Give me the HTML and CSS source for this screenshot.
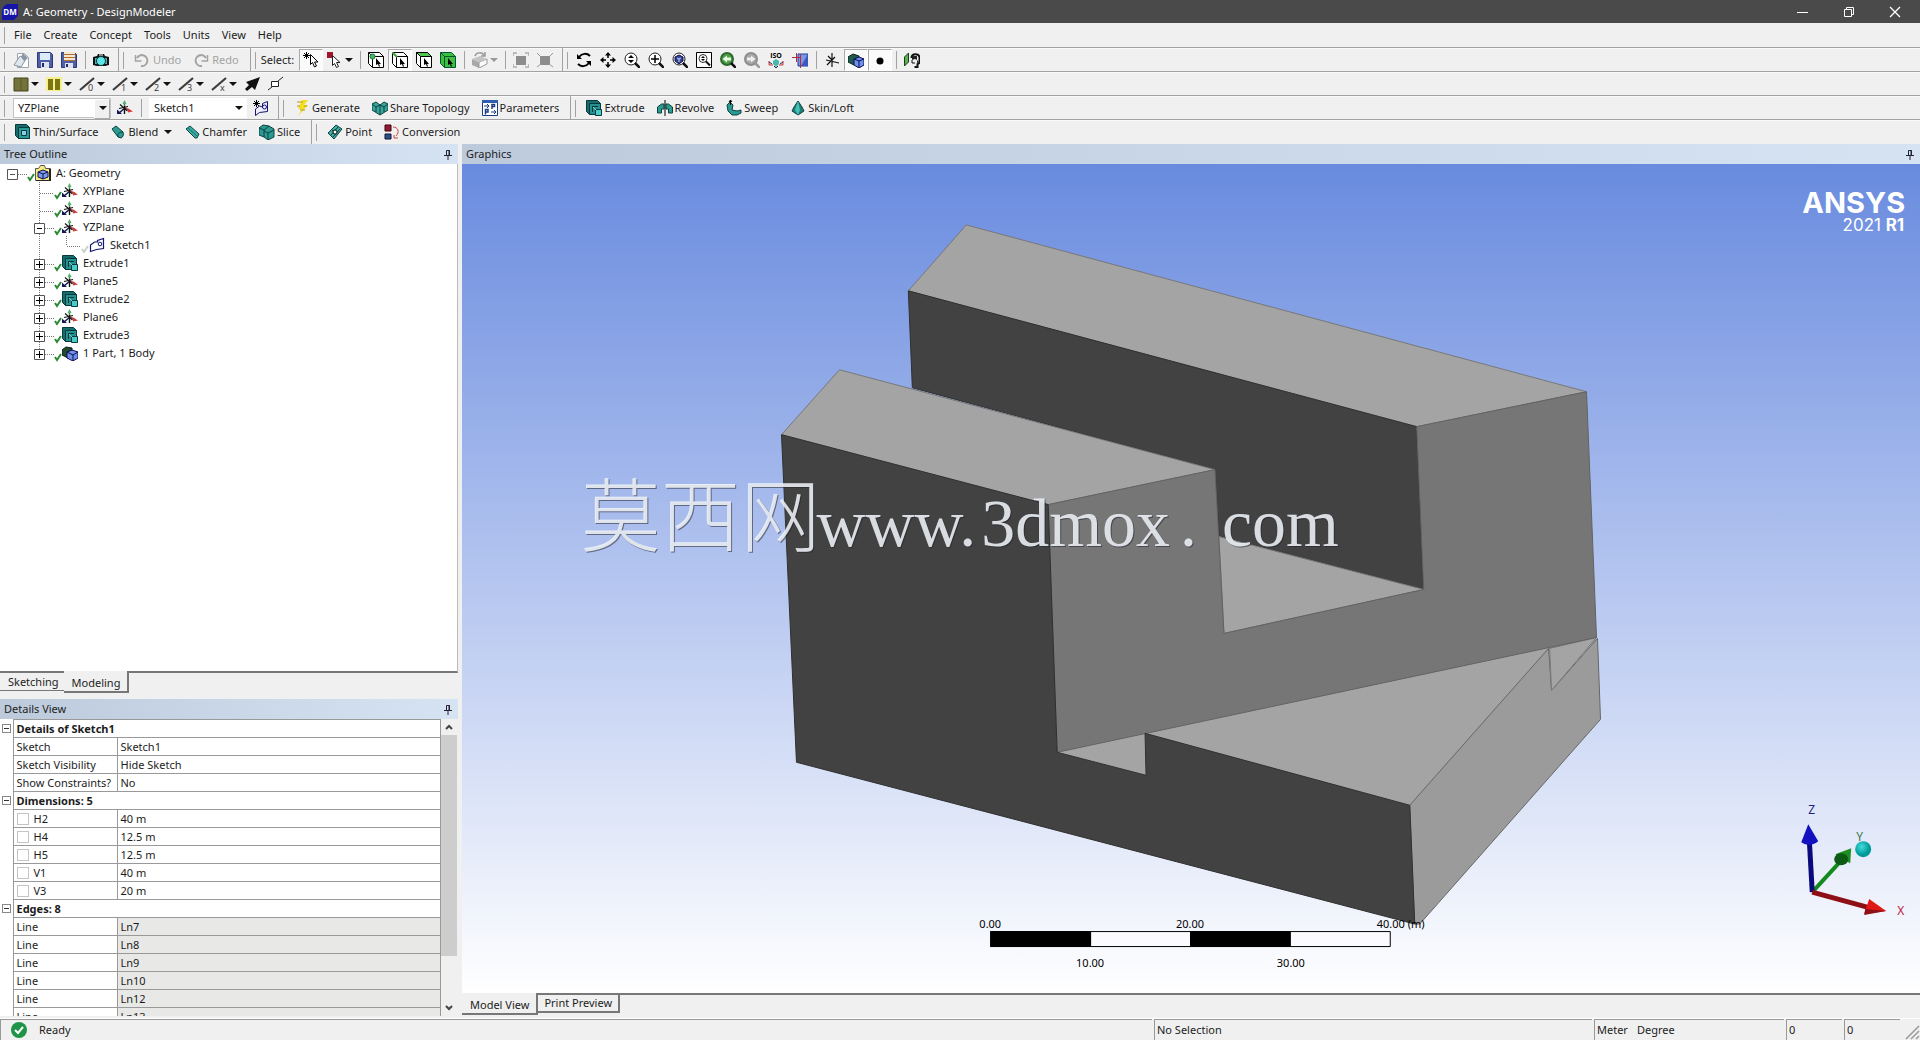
FILE: index.html
```html
<!DOCTYPE html>
<html lang="en">
<head>
<meta charset="utf-8">
<title>A: Geometry - DesignModeler</title>
<link rel="stylesheet" href="styles.css">
</head>
<body>
<svg class="defs" aria-hidden="true">
  <symbol id="pin" viewBox="0 0 8 11"><path d="M2.500 6V1.500h3V6M0 6.500h8M4 7v4" fill="none" stroke="#223"/><path d="M5 1v5" stroke="#223"/></symbol>
  <symbol id="b-leaf" viewBox="0 0 20 18"><path d="M5.500 0v18M6 11.500h14" class="dots"/></symbol>
  <symbol id="b-line" viewBox="0 0 20 18"><path d="M5.500 0v18" class="dots"/></symbol>
  <symbol id="b-end" viewBox="0 0 20 18"><path d="M5.500 0v10M6 10.500h14" class="dots"/></symbol>
  <symbol id="b-root" viewBox="0 0 20 18"><path d="M11 10.500h9" class="dots"/><path d="M.5 5.500h10v10H.5zM3 10.500h5" class="box"/></symbol>
  <symbol id="b-minus" viewBox="0 0 20 18"><path d="M5.500 0v18M11 10.500h9" class="dots"/><path d="M.5 5.500h10v10H.5z" class="box"/><path d="M3 10.500h5" stroke="#000"/></symbol>
  <symbol id="b-plus" viewBox="0 0 20 18"><path d="M5.500 0v18M11 10.500h9" class="dots"/><path d="M.5 5.500h10v10H.5z" class="box"/><path d="M2 10.500h7M5.500 7v7" stroke="#000"/></symbol>
  <symbol id="b-last" viewBox="0 0 20 18"><path d="M5.500 0v6M11 10.500h9" class="dots"/><path d="M.5 5.500h10v10H.5z" class="box"/><path d="M2 10.500h7M5.500 7v7" stroke="#000"/></symbol>
  <symbol id="check" viewBox="0 0 8 18"><path d="M1 13l2 3 4-6" fill="none" stroke="currentColor" stroke-width="2"/></symbol>
  <symbol id="axes" viewBox="0 0 16 16"><path d="M7.500 14V2" stroke="#3c8a50" stroke-width="1.500"/><path d="M5.500 4l2-4 2 4z" fill="#5ab070"/><path d="M8 8l5 2.500" stroke="#b44" stroke-width="1.500"/><path d="M11 8.500l5 3-5 1z" fill="#d43c3c"/><path d="M8 8l-6 5" stroke="#15155a" stroke-width="1.500"/><path d="M0 9.500V14h5z" fill="#15155a"/><path d="M3 4.500l7.500 6.500M7.500 6v8M2 8.500l9-2" stroke="#111" stroke-width="1.100"/></symbol>
  <symbol id="extrude" viewBox="0 0 16 16"><path d="M.5.5h11l3 3v11h-11l-3-3z" fill="#176b6b" stroke="#063a3c"/><path d="M3.500 3.500h11v11h-11z" fill="#25908e" stroke="#063a3c"/><path d="M6 6.500h6M6.500 6v6" stroke="#063a3c"/><path d="M9.500 9.500h6v6h-6z" fill="#4ccac8" stroke="#063a3c"/><path d="M7 7l3 3" stroke="#6cd8d4"/></symbol>
  <symbol id="body" viewBox="0 0 16 16"><path d="M0 5l4-3 6 1v8l-4 2-6-3z" fill="#214b2a" stroke="#0c1c12"/><path d="M5 7l5-2 6 2v6l-5 3-6-3z" fill="#6f8ee6" stroke="#0a0a58"/><path d="M5 7l6 3 5-3M11 10v6" fill="none" stroke="#0a0a58"/></symbol>
  <symbol id="geom" viewBox="0 0 16 16"><path d="M.5 3.500h3l2-3h4l1 3h5v12H.5z" fill="#f6ec7e" stroke="#555"/><path d="M15 4v12H1" fill="none" stroke="#222" stroke-width="2"/><path d="M3 7l5-2 5 2v5l-5 2-5-2z" fill="#7c9bec" stroke="#101050"/><path d="M3 7l5 2 5-2M8 9v5" fill="none" stroke="#101050"/></symbol>
  <symbol id="sketch" viewBox="0 0 16 16"><path d="M1.500 14.500V8l4-3h3V3.500l6-2v10l-7 1z" fill="#fff" stroke="#15156e" stroke-width="1.200"/><circle cx="11" cy="7" r="1.800" fill="none" stroke="#15156e"/></symbol>
  <symbol id="newsketch" viewBox="0 0 16 16"><path d="M2.500 15.500V9l4-3 3 1V3.500l5-2v10l-8 1z" fill="#eef" stroke="#15156e"/><circle cx="11.500" cy="7" r="2" fill="none" stroke="#15156e"/><path d="M3.500 0v7M0 3.500h7M1 1l5 5M6 1L1 6" stroke="#000"/></symbol>
  <symbol id="new" viewBox="0 0 16 16"><path d="M4.500 1.500h7l4 4v10h-11z" fill="#fff" stroke="#9aa4b0"/><path d="M1 13l6-9 6 3-5 8z" fill="#dfe6ee" stroke="#8b95a3"/><path d="M10 1l5 5-4 3-3-4z" fill="#8b95a3"/></symbol>
  <symbol id="save" viewBox="0 0 16 16"><path d="M.5.5h13l2 2v13H.5z" fill="#5060a8" stroke="#2b3878"/><path d="M3 1h10v7H3z" fill="#dcebf8"/><path d="M4 10h8v6H4z" fill="#dde4ee"/><path d="M5 11h2v4H5z" fill="#1f2b6b"/></symbol>
  <symbol id="saveas" viewBox="0 0 16 16"><path d="M.5.5h13l2 2v13H.5z" fill="#5060a8" stroke="#2b3878"/><path d="M3 0h11v9H3z" fill="#f3e7cf"/><path d="M3 2.500h11M3 5.500h11M3 8.500h11" stroke="#b0702c"/><path d="M4 11h8v5H4z" fill="#dde4ee"/><path d="M5 12h2v3H5z" fill="#1f2b6b"/></symbol>
  <symbol id="camera" viewBox="0 0 16 16"><path d="M0 5l4-1 1-2h6l1 2 4 1v8l-4 1H4l-4-1z" fill="#111"/><path d="M2 6h2v6H2zM12 6h2v6h-2z" fill="#54a8a8"/><circle cx="8" cy="9" r="4.500" fill="#5ee6e6" stroke="#063a3c"/><path d="M6 3h4" stroke="#fff"/></symbol>
  <symbol id="undo" viewBox="0 0 16 16"><path d="M3 6a5.500 5.500 0 1 1 4 8" fill="none" stroke="#a3a3a3" stroke-width="2"/><path d="M1.500 3v6h6" fill="none" stroke="#a3a3a3" stroke-width="1.500"/></symbol>
  <symbol id="redo" viewBox="0 0 16 16"><path d="M13 6a5.500 5.500 0 1 0-4 8" fill="none" stroke="#a3a3a3" stroke-width="2"/><path d="M14.500 3v6h-6" fill="none" stroke="#a3a3a3" stroke-width="1.500"/></symbol>
  <symbol id="cursor" viewBox="0 0 16 16"><path d="M7.500 2.500v10l2-2 2 4.500 2-1-2-4h3.500z" fill="#fff" stroke="#000"/><path d="M3.500 0v7M0 3.500h7M1 1l5 5M6 1L1 6" stroke="#000"/></symbol>
  <symbol id="redcursor" viewBox="0 0 16 16"><path d="M0 0h6v6H0z" fill="#a2142c"/><path d="M5.500 3.500v10l2-2 2 4 2-1-2-4H13z" fill="#fff" stroke="#222"/></symbol>
  <symbol id="cube-v" viewBox="0 0 16 16"><path d="M.5.5h11l4 4v11h-11l-4-4zM.5.5l4 4h11M4.500 4.500v11" fill="#fff" stroke="#000"/><circle cx="4.500" cy="4.500" r="2.500" fill="#4db84d" stroke="#175"/><path d="M8 6v7l2-1 1 3 1-1-1-2h2z" fill="#000"/></symbol>
  <symbol id="cube-e" viewBox="0 0 16 16"><path d="M.5.5h11l4 4v11h-11l-4-4zM.5.5l4 4h11M4.500 4.500v11" fill="#fff" stroke="#000"/><path d="M0 0l5 5" stroke="#3aa63a" stroke-width="2"/><path d="M8 6v7l2-1 1 3 1-1-1-2h2z" fill="#000"/></symbol>
  <symbol id="cube-f" viewBox="0 0 16 16"><path d="M.5.5h11l4 4v11h-11l-4-4z" fill="#fff" stroke="#000"/><path d="M.5.5h11l4 4h-11z" fill="#4ec84e" stroke="#000"/><path d="M4.500 4.500v11" stroke="#000"/><path d="M8 6v7l2-1 1 3 1-1-1-2h2z" fill="#000"/></symbol>
  <symbol id="cube-b" viewBox="0 0 16 16"><path d="M.5.5h11l4 4v11h-11l-4-4z" fill="#3fbf3f" stroke="#053"/><path d="M.5.5l4 4h11M4.500 4.500v11" fill="none" stroke="#053"/><path d="M8 6v7l2-1 1 3 1-1-1-2h2z" fill="#000"/></symbol>
  <symbol id="graycube" viewBox="0 0 16 16"><path d="M0 7l7 3v6l-7-3z" fill="#a8a8a8"/><path d="M7 10l8-3v5l-8 4z" fill="#fafafa" stroke="#999"/><path d="M0 7l8-3 7 3-8 3z" fill="#c4c4c4"/><path d="M3 4c1-4 7-4 9-1M13 0v4H9" fill="none" stroke="#999" stroke-width="1.500"/></symbol>
  <symbol id="fit" viewBox="0 0 16 16"><path d="M3 4h10v9H3z" fill="#8d8d8d"/><path d="M0 4V1h4M12 1h4v3M0 12v3h4M12 15h4v-3" fill="none" stroke="#8d8d8d"/></symbol>
  <symbol id="shrink" viewBox="0 0 16 16"><path d="M3 4h10v9H3z" fill="#8d8d8d"/><path d="M0 1l4 4M16 1l-4 4M0 15l4-3M16 15l-4-3" stroke="#999"/></symbol>
  <symbol id="rotate" viewBox="0 0 16 16"><path d="M3 5c3-4 8-4 11-1M13 11c-3 4-8 4-11 1" fill="none" stroke="#000" stroke-width="2"/><path d="M1 2v5h5zM15 14V9h-5z" fill="#000"/></symbol>
  <symbol id="pan" viewBox="0 0 16 16"><path d="M8 3v3M8 10v3M3 8h3M10 8h3" stroke="#000" stroke-width="1.500"/><path d="M8 0l3 3.500H5zM8 16l3-3.500H5zM0 8l3.500-3v6zM16 8l-3.500-3v6z"/></symbol>
  <symbol id="lens" viewBox="0 0 16 16"><circle cx="7" cy="7" r="6" fill="#fff" stroke="#222"/><path d="M11 11l5 5" stroke="#111" stroke-width="2.500"/></symbol>
  <symbol id="zoom" viewBox="0 0 16 16"><use href="#lens"/><path d="M7 3l3 3H4zM7 11l3-3H4z"/></symbol>
  <symbol id="zoomin" viewBox="0 0 16 16"><use href="#lens"/><path d="M3 7h8M7 3v8" stroke="#000" stroke-width="1.500"/></symbol>
  <symbol id="zoomfit" viewBox="0 0 16 16"><use href="#lens"/><path d="M3 5l4-2 4 2v4l-4 3-4-3z" fill="#334291" stroke="#101050"/><path d="M5 6l2 1 2-1M7 7v3" fill="none" stroke="#c9d4ff"/></symbol>
  <symbol id="zoombox" viewBox="0 0 16 16"><path d="M.5.5h15v15H.5z" fill="#fff" stroke="#000"/><circle cx="7" cy="6.500" r="4" fill="none" stroke="#333"/><path d="M10 9.500l4 4" stroke="#111" stroke-width="2"/><path d="M7 4l2 2H5zM7 9l2-2H5z"/></symbol>
  <symbol id="prev" viewBox="0 0 16 16"><circle cx="7" cy="7" r="6" fill="#4f9d4b" stroke="#2b6a2b" stroke-width="2"/><path d="M11 11l5 5" stroke="#111" stroke-width="2.500"/><path d="M2.500 7L7 3.500v2h4v3H7v2z" fill="#e6fbe0"/></symbol>
  <symbol id="next" viewBox="0 0 16 16"><circle cx="7" cy="7" r="6" fill="#a9a9a9" stroke="#8e8e8e" stroke-width="2"/><path d="M11 11l5 5" stroke="#999" stroke-width="2.500"/><path d="M11.500 7L7 3.500v2H3v3h4v2z" fill="#eee"/></symbol>
  <symbol id="iso" viewBox="0 0 16 16"><path d="M8 7l3 2v3l-3 3-3-3V9z" fill="#45b9ad"/><path d="M1 9v4h4M15 9v4h-4" stroke="#c33" fill="none"/><path d="M1 10l3 2M15 10l-3 2M6 14l2 2 2-2" stroke="#225" fill="none"/></symbol>
  <symbol id="lookat" viewBox="0 0 16 16"><path d="M6 2h10v12H6z" fill="#7d97e4" stroke="#223a9b"/><path d="M9 14l7-12v12z" fill="#3c57c0"/><path d="M0 5.500h8M4.500 1v9M8.500 3v13" stroke="#b32b3b"/></symbol>
  <symbol id="axesk" viewBox="0 0 16 16"><path d="M8 1v14M2 8l13 3M3 13L11 5M4 4l4 4" stroke="#111" stroke-width="1.200" fill="none"/></symbol>
  <symbol id="solid" viewBox="0 0 16 16"><path d="M0 5l5-3 6 2v8l-5 1-6-3z" fill="#1e5a4e" stroke="#0b201c"/><path d="M6 7l5-2 5 2v6l-5 3-5-3z" fill="#6f92e8" stroke="#0a0a58"/><path d="M6 7l5 2 5-2M11 9v7" fill="none" stroke="#0a0a58"/></symbol>
  <symbol id="dot" viewBox="0 0 16 16"><circle cx="8" cy="9" r="3.500"/></symbol>
  <symbol id="person" viewBox="0 0 16 16"><path d="M.5 5l4-4v9l-4 4z" fill="#5fae55" stroke="#14401a"/><path d="M7.500 6c0-5 8-5 8 0v5l-2 1v3h-3" fill="none" stroke="#111" stroke-width="2"/><path d="M8 4h5v4l2 2-2 1V8l-2-1-3 1z" fill="#222"/><path d="M8 8v3h3" fill="none" stroke="#111"/></symbol>
  <symbol id="sq1" viewBox="0 0 16 16"><path d="M1 2h14v13H1z" fill="#74743a" stroke="#45451a"/><path d="M8 2v13" stroke="#565626"/></symbol>
  <symbol id="sq2" viewBox="0 0 16 16"><path d="M0 1h16v14H0z" fill="#f6f08a"/><path d="M2 3h5v11H2zM9 3h5v11H9z" fill="#7b7512"/></symbol>
  <symbol id="slash" viewBox="0 0 16 16"><path d="M1 14L15 2" stroke="#3c3c3c" stroke-width="2.200"/></symbol>
  <symbol id="arrowb" viewBox="0 0 16 16"><path d="M16 1L11 14l-3-3-5 4-2-2 4-4-3-3z" fill="#111"/></symbol>
  <symbol id="leader" viewBox="0 0 16 16"><path d="M3.500 5.500h7v5h-7zM10 5l5-4M4 11l-4 3" fill="#fff" stroke="#222"/></symbol>
  <symbol id="bolt" viewBox="0 0 16 16"><path d="M8 0h6L10 5h4L4 16l4-7H4z" fill="#f3df1d"/><path d="M9 2H3M6 6H3M13 6h-3M11 10H6" stroke="#b59a0a"/></symbol>
  <symbol id="share" viewBox="0 0 16 16"><path d="M0 4l4-2 4 3 4-3 4 2v6l-8 5-8-5z" fill="#3aa59a" stroke="#0b4240"/><path d="M0 4l4 3 4-2 4 2 4-3M8 5v10M4 7v5M12 7v5" fill="none" stroke="#0b4240"/></symbol>
  <symbol id="params" viewBox="0 0 16 16"><path d="M.5.5h15v15H.5z" fill="#fff" stroke="#1c3d84"/><path d="M0 0h16v3H0z" fill="#2e5cae"/><path d="M2 6h4M5 4l2 2-2 2M9 12h4M12 10l2 2-2 2" fill="none" stroke="#1c3d84"/><path d="M10 9V4.500h2.500v2H10M3.500 14.500v-5H6v2.500H3.500" fill="none" stroke="#1c3d84" stroke-width="1.500"/></symbol>
  <symbol id="revolve" viewBox="0 0 16 16"><path d="M.5 13V7l4-3H7v5H4.500v4zM15.500 13V7l-4-3H9v5h2.500v4z" fill="#2d9a91" stroke="#0b4240"/><path d="M8 0v16" stroke="#000"/></symbol>
  <symbol id="sweep" viewBox="0 0 16 16"><path d="M1 5l3-3 3 3-1 5 5 1 4-1v3l-4 2H6l-4-4z" fill="#2d9a91" stroke="#0b4240"/><path d="M4.500 0v5M3 2l1.500-2L6 2" fill="none" stroke="#000"/></symbol>
  <symbol id="skin" viewBox="0 0 16 16"><path d="M8 1l4 6 2 4-6 4-6-4 2-4z" fill="#1f7f77" stroke="#0b4240"/><path d="M8 1l2 9-2 5-3-5z" fill="#44c0b6"/></symbol>
  <symbol id="thin" viewBox="0 0 16 16"><path d="M.5.5h11l3 3v11h-11l-3-3z" fill="#176b6b" stroke="#063a3c"/><path d="M3.500 3.500h11v11h-11z" fill="#2a9b98" stroke="#063a3c"/><path d="M6.500 6.500h5v5h-5z" fill="#8ce" stroke="#063a3c"/></symbol>
  <symbol id="blend" viewBox="0 0 16 16"><path d="M2 5l4-3 7 6c1 3 0 5-2 6l-3-1z" fill="#2d9a91" stroke="#0b4240"/><path d="M8 13c-1-3 1-5 5-5" fill="none" stroke="#0b4240"/></symbol>
  <symbol id="chamfer" viewBox="0 0 16 16"><path d="M2 5l4-3 9 8-2 4h-2z" fill="#3dada3" stroke="#0b4240"/><path d="M4 4l9 8" stroke="#0e6b66"/></symbol>
  <symbol id="slice" viewBox="0 0 16 16"><path d="M0 4l4-3 6 1 5 3v8l-6 3-4-3-5-2z" fill="#2d9a91" stroke="#0b4240"/><path d="M0 4l5 2 5-4M5 6v7M5 7l4 2 6-3M9 9v7" fill="none" stroke="#0b4240"/></symbol>
  <symbol id="point" viewBox="0 0 16 16"><path d="M1 9l8-8 6 4-8 10z" fill="#3dada3" stroke="#0b4240"/><path d="M4 11l7-8M6 13l7-8M5 6l5 4" stroke="#0b4240"/><circle cx="8" cy="8" r="2" fill="#fff" stroke="#111"/></symbol>
  <symbol id="convert" viewBox="0 0 16 16"><path d="M1 1h6v6H1z" fill="#8c1d3c" stroke="#400"/><path d="M1 10h6v5H1z" fill="#28528c" stroke="#113"/><path d="M9 3c5 0 7 5 3 9M10 11v3h4" fill="none" stroke="#c5483f"/></symbol>
</svg>

<div class="app">
  <header class="titlebar">
    <svg class="logo" viewBox="0 0 16 16"><path d="M1 3l4-3h11v12l-4 4H0V8z" fill="#1714a8"/><text x="8" y="11" text-anchor="middle" class="logotext">DM</text></svg>
    <h1 class="title">A: Geometry - DesignModeler</h1>
    <div class="winctl">
      <button aria-label="Minimize"><svg viewBox="0 0 12 12"><path d="M0 6.500h11" stroke="#fff" stroke-width="1"/></svg></button>
      <button aria-label="Restore"><svg viewBox="0 0 12 12"><path d="M1.500 3.500h7v7h-7zM3.500 3V1.500h7v7H9" fill="none" stroke="#fff"/></svg></button>
      <button aria-label="Close"><svg viewBox="0 0 12 12"><path d="M1 1l10 10M11 1L1 11" stroke="#fff" stroke-width="1.300"/></svg></button>
    </div>
  </header>

  <nav class="bar menu">
    <i class="grip"></i>
    <button>File</button><button>Create</button><button>Concept</button><button>Tools</button><button>Units</button><button>View</button><button>Help</button>
  </nav>

  <div class="bar">
    <div class="group"><i class="grip"></i>
      <button class="ic" aria-label="New"><svg><use href="#new"/></svg></button>
      <button class="ic" aria-label="Save"><svg><use href="#save"/></svg></button>
      <button class="ic" aria-label="Export"><svg><use href="#saveas"/></svg></button>
      <i class="sep"></i>
      <button class="ic" aria-label="Image capture"><svg><use href="#camera"/></svg></button>
    </div>
    <div class="group"><i class="grip"></i>
      <button class="tx" disabled><svg><use href="#undo"/></svg>Undo</button>
      <button class="tx" disabled><svg><use href="#redo"/></svg>Redo</button>
    </div>
    <div class="group"><i class="grip"></i>
      <span class="caption">Select:</span>
      <button class="ic on" aria-label="New selection"><svg><use href="#cursor"/></svg></button>
      <button class="dd" aria-label="Select mode"><svg><use href="#redcursor"/></svg></button>
      <i class="sep"></i>
      <button class="ic" aria-label="Points"><svg><use href="#cube-v"/></svg></button>
      <button class="ic on" aria-label="Edges"><svg><use href="#cube-e"/></svg></button>
      <button class="ic" aria-label="Faces"><svg><use href="#cube-f"/></svg></button>
      <button class="ic" aria-label="Bodies"><svg><use href="#cube-b"/></svg></button>
      <i class="sep"></i>
      <button class="dd" disabled aria-label="Extend selection"><svg><use href="#graycube"/></svg></button>
      <i class="sep"></i>
      <button class="ic" disabled aria-label="Expand face"><svg><use href="#fit"/></svg></button>
      <button class="ic" disabled aria-label="Shrink face"><svg><use href="#shrink"/></svg></button>
    </div>
    <div class="group last"><i class="grip"></i>
      <button class="ic" aria-label="Rotate"><svg><use href="#rotate"/></svg></button>
      <button class="ic" aria-label="Pan"><svg><use href="#pan"/></svg></button>
      <button class="ic" aria-label="Zoom"><svg><use href="#zoom"/></svg></button>
      <button class="ic" aria-label="Box zoom"><svg><use href="#zoomin"/></svg></button>
      <button class="ic" aria-label="Zoom to fit"><svg><use href="#zoomfit"/></svg></button>
      <button class="ic" aria-label="Magnifier"><svg><use href="#zoombox"/></svg></button>
      <button class="ic" aria-label="Previous view"><svg><use href="#prev"/></svg></button>
      <button class="ic" disabled aria-label="Next view"><svg><use href="#next"/></svg></button>
      <button class="ic" aria-label="Isometric view"><svg viewBox="0 0 16 16"><use href="#iso"/><text x="8" y="6" text-anchor="middle" class="isotext">ISO</text></svg></button>
      <button class="ic" aria-label="Look at plane"><svg><use href="#lookat"/></svg></button>
      <i class="sep"></i>
      <button class="ic" aria-label="Display plane"><svg><use href="#axesk"/></svg></button>
      <button class="ic on" aria-label="Display model"><svg><use href="#solid"/></svg></button>
      <button class="ic on" aria-label="Display points"><svg><use href="#dot"/></svg></button>
      <i class="sep"></i>
      <button class="ic" aria-label="Look at face"><svg><use href="#person"/></svg></button>
    </div>
  </div>

  <div class="bar">
    <i class="grip"></i>
    <button class="dd" aria-label="Face colour"><svg><use href="#sq1"/></svg></button>
    <button class="dd" aria-label="Edge colour"><svg><use href="#sq2"/></svg></button>
    <button class="dd" aria-label="Free edges"><svg viewBox="0 0 16 16"><use href="#slash"/><text x="9" y="15" class="num">0</text></svg></button>
    <button class="dd" aria-label="Single edges"><svg viewBox="0 0 16 16"><use href="#slash"/><text x="9" y="15" class="num">1</text></svg></button>
    <button class="dd" aria-label="Double edges"><svg viewBox="0 0 16 16"><use href="#slash"/><text x="9" y="15" class="num">2</text></svg></button>
    <button class="dd" aria-label="Triple edges"><svg viewBox="0 0 16 16"><use href="#slash"/><text x="9" y="15" class="num">3</text></svg></button>
    <button class="dd" aria-label="Multiple edges"><svg viewBox="0 0 16 16"><use href="#slash"/><text x="9" y="15" class="num">x</text></svg></button>
    <button class="ic" aria-label="Edge direction"><svg><use href="#arrowb"/></svg></button>
    <button class="ic" aria-label="Display vertices"><svg><use href="#leader"/></svg></button>
  </div>

  <div class="bar">
    <div class="group"><i class="grip"></i>
      <span class="combo raised"><select aria-label="Active plane"><option>YZPlane</option></select></span>
      <button class="ic" aria-label="New plane"><svg><use href="#axes"/></svg></button>
      <i class="sep"></i>
      <span class="combo"><select aria-label="Active sketch"><option>Sketch1</option></select></span>
      <button class="ic" aria-label="New sketch"><svg><use href="#newsketch"/></svg></button>
    </div>
    <div class="group"><i class="grip"></i>
      <button class="tx"><svg><use href="#bolt"/></svg>Generate</button>
      <button class="tx"><svg><use href="#share"/></svg>Share Topology</button>
      <button class="tx"><svg><use href="#params"/></svg>Parameters</button>
    </div>
    <div class="group last"><i class="grip"></i>
      <button class="tx"><svg><use href="#extrude"/></svg>Extrude</button>
      <button class="tx"><svg><use href="#revolve"/></svg>Revolve</button>
      <button class="tx"><svg><use href="#sweep"/></svg>Sweep</button>
      <button class="tx"><svg><use href="#skin"/></svg>Skin/Loft</button>
    </div>
  </div>

  <div class="bar">
    <div class="group"><i class="grip"></i>
      <button class="tx"><svg><use href="#thin"/></svg>Thin/Surface</button>
      <button class="tx more"><svg><use href="#blend"/></svg>Blend</button>
      <button class="tx"><svg><use href="#chamfer"/></svg>Chamfer</button>
      <button class="tx"><svg><use href="#slice"/></svg>Slice</button>
    </div>
    <div class="group last"><i class="grip"></i>
      <button class="tx"><svg><use href="#point"/></svg>Point</button>
      <button class="tx"><svg><use href="#convert"/></svg>Conversion</button>
    </div>
  </div>

  <main class="work">
    <aside class="side">
      <section class="outline">
        <h2 class="head">Tree Outline<svg class="pin"><use href="#pin"/></svg></h2>
        <ul class="tree">
          <li><svg class="br"><use href="#b-root"/></svg><svg class="ck"><use href="#check"/></svg><svg class="ti"><use href="#geom"/></svg>A: Geometry</li>
          <li class="l1"><svg class="br"><use href="#b-leaf"/></svg><svg class="ck"><use href="#check"/></svg><svg class="ti"><use href="#axes"/></svg>XYPlane</li>
          <li class="l1"><svg class="br"><use href="#b-leaf"/></svg><svg class="ck"><use href="#check"/></svg><svg class="ti"><use href="#axes"/></svg>ZXPlane</li>
          <li class="l1"><svg class="br"><use href="#b-minus"/></svg><svg class="ck"><use href="#check"/></svg><svg class="ti"><use href="#axes"/></svg>YZPlane</li>
          <li class="l1"><svg class="br"><use href="#b-line"/></svg><svg class="br sub"><use href="#b-end"/></svg><svg class="ck dim"><use href="#check"/></svg><svg class="ti"><use href="#sketch"/></svg>Sketch1</li>
          <li class="l1"><svg class="br"><use href="#b-plus"/></svg><svg class="ck"><use href="#check"/></svg><svg class="ti"><use href="#extrude"/></svg>Extrude1</li>
          <li class="l1"><svg class="br"><use href="#b-plus"/></svg><svg class="ck"><use href="#check"/></svg><svg class="ti"><use href="#axes"/></svg>Plane5</li>
          <li class="l1"><svg class="br"><use href="#b-plus"/></svg><svg class="ck"><use href="#check"/></svg><svg class="ti"><use href="#extrude"/></svg>Extrude2</li>
          <li class="l1"><svg class="br"><use href="#b-plus"/></svg><svg class="ck"><use href="#check"/></svg><svg class="ti"><use href="#axes"/></svg>Plane6</li>
          <li class="l1"><svg class="br"><use href="#b-plus"/></svg><svg class="ck"><use href="#check"/></svg><svg class="ti"><use href="#extrude"/></svg>Extrude3</li>
          <li class="l1"><svg class="br"><use href="#b-last"/></svg><svg class="ck"><use href="#check"/></svg><svg class="ti"><use href="#body"/></svg>1 Part, 1 Body</li>
        </ul>
        <div class="tabs"><button>Sketching</button><button class="active">Modeling</button></div>
      </section>

      <section class="details">
        <h2 class="head">Details View<svg class="pin"><use href="#pin"/></svg></h2>
        <div class="detailbody">
          <div class="scroller">
            <table>
              <colgroup><col class="cgut"><col class="cname"><col></colgroup>
              <tr><td class="gut"><i class="min"></i></td><th colspan="2">Details of Sketch1</th></tr>
              <tr><td class="gut"></td><td>Sketch</td><td>Sketch1</td></tr>
              <tr><td class="gut"></td><td>Sketch Visibility</td><td>Hide Sketch</td></tr>
              <tr><td class="gut"></td><td>Show Constraints?</td><td>No</td></tr>
              <tr><td class="gut"><i class="min"></i></td><th colspan="2">Dimensions: 5</th></tr>
              <tr><td class="gut"></td><td><label><input type="checkbox">H2</label></td><td>40 m</td></tr>
              <tr><td class="gut"></td><td><label><input type="checkbox">H4</label></td><td>12.5 m</td></tr>
              <tr><td class="gut"></td><td><label><input type="checkbox">H5</label></td><td>12.5 m</td></tr>
              <tr><td class="gut"></td><td><label><input type="checkbox">V1</label></td><td>40 m</td></tr>
              <tr><td class="gut"></td><td><label><input type="checkbox">V3</label></td><td>20 m</td></tr>
              <tr><td class="gut"><i class="min"></i></td><th colspan="2">Edges: 8</th></tr>
              <tr><td class="gut"></td><td>Line</td><td class="ro">Ln7</td></tr>
              <tr><td class="gut"></td><td>Line</td><td class="ro">Ln8</td></tr>
              <tr><td class="gut"></td><td>Line</td><td class="ro">Ln9</td></tr>
              <tr><td class="gut"></td><td>Line</td><td class="ro">Ln10</td></tr>
              <tr><td class="gut"></td><td>Line</td><td class="ro">Ln12</td></tr>
              <tr><td class="gut"></td><td>Line</td><td class="ro">Ln13</td></tr>
            </table>
          </div>
          <div class="scrollbar">
            <svg viewBox="0 0 16 16"><path d="M5 10l3-3 3 3" fill="none" stroke="#444" stroke-width="2"/></svg>
            <i class="thumb"></i>
            <svg viewBox="0 0 16 16"><path d="M5 6l3 3 3-3" fill="none" stroke="#444" stroke-width="2"/></svg>
          </div>
        </div>
      </section>
    </aside>

    <section class="graphics">
      <h2 class="head">Graphics<svg class="pin"><use href="#pin"/></svg></h2>
      <div class="canvas">
        <svg class="scene" viewBox="462 164 1458 830" preserveAspectRatio="xMidYMid meet" role="img" aria-label="Model">
          <defs>
            <radialGradient id="ball" cx=".4" cy=".35"><stop offset="0" stop-color="#4dd"/><stop offset="1" stop-color="#099"/></radialGradient>
          </defs>
          <g stroke-width="1" stroke-linejoin="round">
            <path d="M908 291L966 225L1587 392L1417 427z" fill="#a4a4a4" stroke="#777"/>
            <path d="M908 291L1417 427L1424 590L1219 537L1215 470L912 388z" fill="#424242" stroke="#303030"/>
            <path d="M1219 537L1424 590L1224 634z" fill="#a4a4a4" stroke="#777"/>
            <path d="M781 435L839 370L1215 470L1048 505z" fill="#a4a4a4" stroke="#777"/>
            <path d="M1145 728L1550 640L1590 636L1598 640L1410 806L1145 738z" fill="#a4a4a4"/>
            <path d="M1410 806L1549 649L1552 691L1598 639L1601 720L1420 925L1415 925z" fill="#9b9b9b" stroke="#666"/>
            <path d="M1550 649L1597 638L1552 691z" fill="#a4a4a4" stroke="#777"/>
            <path d="M1057 753L1146 728L1147 776z" fill="#a4a4a4"/>
            <path d="M1417 427L1587 392L1597 638L1057 753L1048 505L1215 470L1224 634L1424 590z" fill="#767676" stroke="#626262"/>
            <path d="M781 435L1048 505L1057 753L1146 776L1145 734L1410 806L1415 925L796 763z" fill="#424242" stroke="#303030"/>
          </g>
          <g class="scale">
            <path d="M990.500 932.500h400v15h-400z" fill="#fbfbff" stroke="#000"/>
            <path d="M990 932h101v16H990zM1190 932h101v16h-101z"/>
            <text x="990" y="929" text-anchor="middle">0.00</text>
            <text x="1190" y="929" text-anchor="middle">20.00</text>
            <text x="1377" y="929">40.00 (m)</text>
            <text x="1090" y="968" text-anchor="middle">10.00</text>
            <text x="1291" y="968" text-anchor="middle">30.00</text>
          </g>
          <g class="triad">
            <path d="M1813 893L1847 856" stroke="#128a1e" stroke-width="4"/>
            <path d="M1852 849L1851 864L1836 855z" fill="#1c8e24"/><ellipse cx="1842" cy="860" rx="7" ry="6" fill="#0c5a14"/>
            <path d="M1813 893L1810 840" stroke="#0a0a7c" stroke-width="5"/>
            <path d="M1809 825L1819 842Q1810 849 1802 843z" fill="#1212c0"/>
            <path d="M1813 893L1868 908" stroke="#8e1016" stroke-width="5"/>
            <path d="M1887 912L1870 900L1865 915z" fill="#e01818"/><path d="M1887 912L1865 916L1866 910z" fill="#8e1016"/>
            <circle cx="1864" cy="850" r="8" fill="url(#ball)"/>
            <text x="1809" y="815" fill="#22227a">Z</text><text x="1857" y="842" fill="#3a7a50">Y</text><text x="1898" y="916" fill="#c02040">X</text>
          </g>
          <g class="brand" fill="#fff" text-anchor="end"><text x="1906" y="213" class="b1">ANSYS</text><text x="1905" y="231" class="b2">2021 <tspan class="b3">R1</tspan></text></g>
          <text class="mark"><tspan class="han" x="580" y="545">莫西网</tspan><tspan x="816" y="546">www.</tspan><tspan x="981">3dmox</tspan><tspan x="1180">.</tspan><tspan x="1222">com</tspan></text>
        </svg>
      </div>
      <div class="tabs bottom"><button class="active">Model View</button><button>Print Preview</button></div>
    </section>
  </main>

  <footer class="status">
    <div class="pane ready"><svg viewBox="0 0 16 16"><circle cx="8" cy="8" r="8" fill="#1f9447"/><path d="M4 8l3 3 5-6" fill="none" stroke="#fff" stroke-width="2"/></svg>Ready</div>
    <div class="pane sel">No Selection</div>
    <div class="pane unit"><span>Meter</span><span>Degree</span></div>
    <div class="pane num0">0</div>
    <div class="pane num0">0</div>
    <svg class="size" viewBox="0 0 16 16"><path d="M2 15L15 2M7 15l8-8M12 15l3-3" stroke="#999" stroke-width="1.500"/></svg>
  </footer>
</div>
</body>
</html>
```
FILE: styles.css
```css
* { box-sizing: border-box; }
body { margin: 0; background: #f0f0f0; color: #1c1c1c; font: 11px/16px "Noto Sans", "Open Sans", sans-serif; }
button, select, input { font: inherit; color: inherit; }
button { margin: 0; padding: 0; border: 0; background: none; white-space: nowrap; }
h1, h2 { margin: 0; font-size: 11px; font-weight: 400; }
.defs { position: absolute; width: 0; height: 0; }
.dots { fill: none; stroke: #777; stroke-dasharray: 1 1; }
.box { fill: #fff; stroke: #555; }
.app { display: flex; flex-direction: column; height: 100vh; min-height: 600px; overflow: hidden; }

.titlebar { display: flex; align-items: center; height: 23px; background: #4a4a4a; color: #fff; padding-left: 2px; flex: none; }
.logo { width: 16px; height: 16px; margin-right: 5px; overflow: visible; }
.logotext { fill: #fff; font: bold 8px "Open Sans", sans-serif; }
.title { flex: 1; }
.winctl { display: flex; padding-right: 2px; }
.winctl button { width: 46px; height: 20px; display: grid; place-items: center; }
.winctl svg { width: 12px; height: 12px; }

.bar { display: flex; align-items: center; height: 24px; flex: none; border-bottom: 1px solid #a2a2a2; box-shadow: inset 0 1px #fafafa; }
.bar.menu { height: 25px; box-shadow: none; }
.bar:nth-of-type(4) { border-bottom: 0; }
.group { display: flex; align-items: center; align-self: stretch; padding-right: 5px; border-right: 1px solid #a2a2a2; }
.group.last { border: 0; }
.grip { width: 9px; flex: none; align-self: stretch; border-left: 4px solid transparent; }
.grip::before { content: ""; display: block; width: 1px; height: 17px; margin-top: 4px; background: #a2a2a2; }
.sep { width: 8px; height: 18px; flex: none; background: linear-gradient(#a2a2a2, #a2a2a2) 4px 0 / 1px 18px no-repeat; }
.menu button { padding: 0 6px; }
.menu button:nth-of-type(1) { padding-left: 5px; }
.bar svg { width: 16px; height: 16px; flex: none; overflow: visible; }
.ic { width: 24px; height: 22px; display: grid; place-items: center; }
.ic.on { background: #fafafa; border: 1px solid #fff; border-top-color: #aaa; border-left-color: #aaa; }
.dd { width: 33px; height: 22px; display: flex; align-items: center; gap: 2px; padding-left: 4px; }
.dd::after, .more::after, .combo::after { content: ""; border: 4px solid transparent; border-top-color: #111; border-bottom: 0; }
.dd:disabled::after { border-top-color: #999; }
.tx { display: flex; align-items: center; gap: 2px; padding: 0 6px; height: 22px; }
.tx:disabled { color: #a3a3a3; gap: 3px; }
.more::after { margin-left: 4px; }
.caption { padding: 0 5px 0 1px; }
.combo { position: relative; width: 98px; margin: 0 2px 0 4px; }
.combo::after { position: absolute; right: 4px; top: 8px; }
.combo select { appearance: none; width: 100%; height: 20px; padding: 0 4px; border: 1px solid #fff; border-radius: 0; background: #fff; }
.combo.raised select { border-color: #c4c4c4; }
.combo.raised::before { content: ""; position: absolute; right: 1px; top: 1px; width: 14px; height: 18px; background: #f0f0f0; border: 1px solid #aaa; border-top-color: #fff; border-left-color: #fff; }
.num { font: 9px "Open Sans", sans-serif; fill: #333; }
.isotext { font: bold 7px "Open Sans", sans-serif; }

.work { display: flex; flex: 1; gap: 4px; min-height: 0; padding-bottom: 2px; }
.side { display: flex; flex-direction: column; width: 458px; flex: none; }
.head { display: flex; justify-content: space-between; align-items: center; height: 20px; flex: none; padding: 0 6px 0 4px; background: linear-gradient(90deg, #bccadb, #d5e3f3); color: #222; }
.pin { width: 8px; height: 11px; }
.outline { flex: 555; display: flex; flex-direction: column; min-height: 0; }
.tree { flex: 1; margin: 0; padding: 0; background: #fff; list-style: none; border-bottom: 2px solid #777; border-right: 1px solid #bbb; overflow: hidden; }
.tree li { display: flex; align-items: center; height: 18px; padding-left: 7px; }
.tree .l1 { padding-left: 34px; }
.br { width: 20px; height: 18px; }
.sub { margin-left: 7px; }
.ck { width: 8px; height: 18px; color: #2a8a34; }
.dim { color: #ccd0c8; }
.ti { width: 16px; height: 16px; margin-right: 5px; }
.tabs { display: flex; align-items: flex-start; height: 26px; flex: none; }
.tabs button { height: 18px; padding: 0 5px 0 8px; border-bottom: 1px solid #777; }
.tabs .active { margin-top: -2px; padding: 3px 7px 0 8px; height: 22px; background: #f0f0f0; border-right: 2px solid #777; border-bottom: 2px solid #777; }
.tabs.bottom { height: 21px; }
.bottom button { padding: 0 6px; border-right: 2px solid #777; border-bottom: 2px solid #777; }

.details { flex: 317; display: flex; flex-direction: column; min-height: 0; }
.detailbody { flex: 1; display: flex; min-height: 0; background: #fff; }
.scroller { flex: 1; overflow: hidden; }
table { width: 100%; table-layout: fixed; border-collapse: collapse; }
.cgut { width: 13px; }
.cname { width: 104px; }
td, th { height: 18px; padding: 0 3px; border: 1px solid #999; line-height: 16px; text-align: left; font-weight: 400; white-space: nowrap; }
th { font-weight: 700; }
td.gut { border: 0; padding: 0 0 0 2px; }
td.ro { background: #e8e8e7; }
.min { display: block; width: 9px; height: 9px; border: 1px solid #888; background: linear-gradient(#333, #333) 1px 3px / 5px 1px no-repeat; }
td label { display: flex; align-items: center; gap: 5px; }
td input { appearance: none; width: 12px; height: 12px; margin: 0; border: 1px solid #c4c4c4; background: #fff; }
.scrollbar { width: 17px; display: flex; flex-direction: column; background: #f0f0f0; }
.scrollbar svg { width: 16px; height: 16px; }
.thumb { flex: 1; margin-right: 1px; background: #cdcdcd; }
.scrollbar svg:last-child { margin-top: 44px; }

.graphics { flex: 1; min-width: 0; display: flex; flex-direction: column; }
.canvas { flex: 1; min-height: 0; background: linear-gradient(#698bdf, #fff); border-bottom: 2px solid #777; }
.scene { display: block; width: 100%; height: 100%; }
.scale text { font: 11px "Noto Sans", sans-serif; }
.triad text { font: 12px "Noto Sans", sans-serif; }
.brand .b1 { font: 700 29px Inter, sans-serif; }
.brand .b2 { font: 400 17px Inter, sans-serif; }
.brand .b3 { font-weight: 700; }
.mark { font: 68px "Liberation Serif", serif; fill: #f0f5fa; fill-opacity: .88; filter: drop-shadow(1px 1px 0 rgba(30, 30, 40, .6)); }
.han { font: 300 80px "Noto Sans CJK SC", sans-serif; }

.status { display: flex; height: 22px; flex: none; gap: 2px; border-top: 1px solid #fff; }
.pane { display: flex; align-items: center; border-top: 1px solid #999; border-left: 1px solid #999; padding-left: 2px; }
.ready { flex: 1; gap: 12px; padding-left: 10px; }
.ready svg { width: 16px; height: 16px; }
.sel { width: 438px; }
.unit { width: 190px; gap: 9px; }
.num0 { width: 56px; }
.size { width: 16px; height: 16px; align-self: flex-end; margin-left: 2px; }
```
